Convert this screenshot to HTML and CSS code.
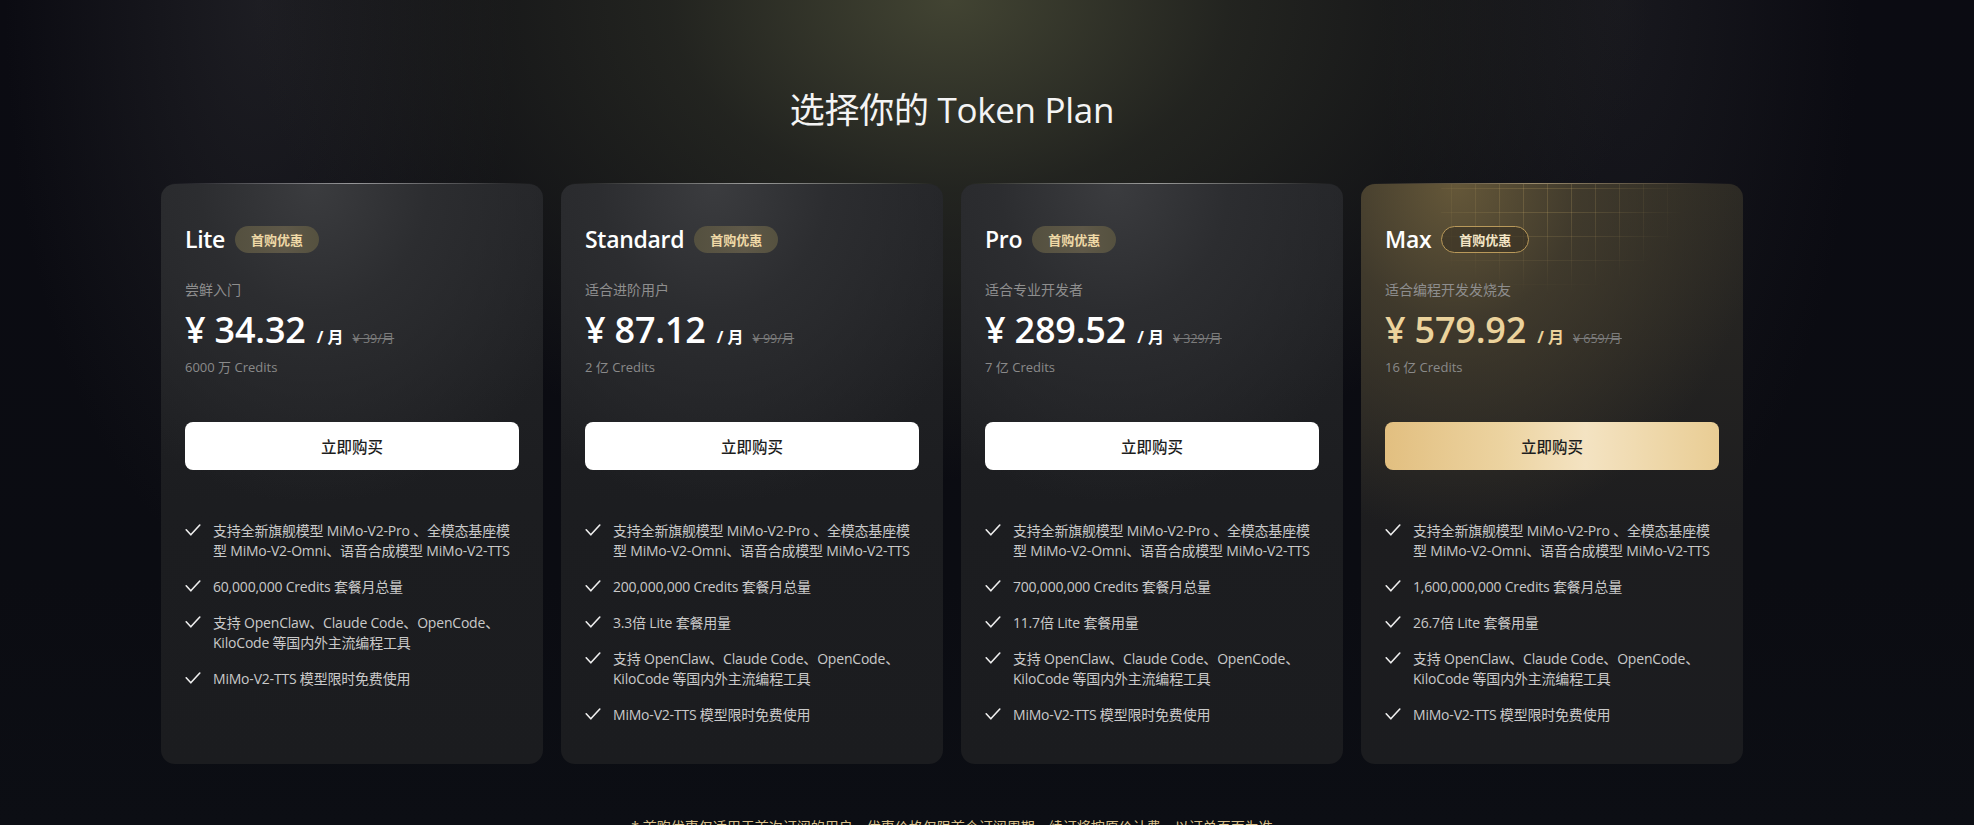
FILE: index.html
```html
<!DOCTYPE html>
<html lang="zh-CN">
<head>
<meta charset="utf-8">
<title>Token Plan</title>
<link rel="stylesheet" href="styles.css">
</head>
<body>
<main class="page">
  <h1 class="title">选择你的 Token Plan</h1>
  <section class="plans">
    <article class="card">
      <header class="card-head"><h2 class="plan-name">Lite</h2><span class="badge">首购优惠</span></header>
      <p class="plan-desc">尝鲜入门</p>
      <div class="price-row"><span class="price">¥ 34.32</span><span class="per">/ 月</span><span class="orig">¥ 39/月</span></div>
      <p class="credits">6000 万 Credits</p>
      <button class="buy">立即购买</button>
      <ul class="features">
        <li><svg class="check" viewBox="0 0 16 12"><polyline points="1.2,5.8 5.8,10.8 14.8,1"/></svg><span>支持全新旗舰模型 MiMo-V2-Pro 、全模态基座模型 MiMo-V2-Omni、语音合成模型 MiMo-V2-TTS</span></li>
        <li><svg class="check" viewBox="0 0 16 12"><polyline points="1.2,5.8 5.8,10.8 14.8,1"/></svg><span>60,000,000 Credits 套餐月总量</span></li>
        <li><svg class="check" viewBox="0 0 16 12"><polyline points="1.2,5.8 5.8,10.8 14.8,1"/></svg><span>支持 OpenClaw、Claude Code、OpenCode、KiloCode 等国内外主流编程工具</span></li>
        <li><svg class="check" viewBox="0 0 16 12"><polyline points="1.2,5.8 5.8,10.8 14.8,1"/></svg><span>MiMo-V2-TTS 模型限时免费使用</span></li>
      </ul>
    </article>
    <article class="card">
      <header class="card-head"><h2 class="plan-name">Standard</h2><span class="badge">首购优惠</span></header>
      <p class="plan-desc">适合进阶用户</p>
      <div class="price-row"><span class="price">¥ 87.12</span><span class="per">/ 月</span><span class="orig">¥ 99/月</span></div>
      <p class="credits">2 亿 Credits</p>
      <button class="buy">立即购买</button>
      <ul class="features">
        <li><svg class="check" viewBox="0 0 16 12"><polyline points="1.2,5.8 5.8,10.8 14.8,1"/></svg><span>支持全新旗舰模型 MiMo-V2-Pro 、全模态基座模型 MiMo-V2-Omni、语音合成模型 MiMo-V2-TTS</span></li>
        <li><svg class="check" viewBox="0 0 16 12"><polyline points="1.2,5.8 5.8,10.8 14.8,1"/></svg><span>200,000,000 Credits 套餐月总量</span></li>
        <li><svg class="check" viewBox="0 0 16 12"><polyline points="1.2,5.8 5.8,10.8 14.8,1"/></svg><span>3.3倍 Lite 套餐用量</span></li>
        <li><svg class="check" viewBox="0 0 16 12"><polyline points="1.2,5.8 5.8,10.8 14.8,1"/></svg><span>支持 OpenClaw、Claude Code、OpenCode、KiloCode 等国内外主流编程工具</span></li>
        <li><svg class="check" viewBox="0 0 16 12"><polyline points="1.2,5.8 5.8,10.8 14.8,1"/></svg><span>MiMo-V2-TTS 模型限时免费使用</span></li>
      </ul>
    </article>
    <article class="card">
      <header class="card-head"><h2 class="plan-name">Pro</h2><span class="badge">首购优惠</span></header>
      <p class="plan-desc">适合专业开发者</p>
      <div class="price-row"><span class="price">¥ 289.52</span><span class="per">/ 月</span><span class="orig">¥ 329/月</span></div>
      <p class="credits">7 亿 Credits</p>
      <button class="buy">立即购买</button>
      <ul class="features">
        <li><svg class="check" viewBox="0 0 16 12"><polyline points="1.2,5.8 5.8,10.8 14.8,1"/></svg><span>支持全新旗舰模型 MiMo-V2-Pro 、全模态基座模型 MiMo-V2-Omni、语音合成模型 MiMo-V2-TTS</span></li>
        <li><svg class="check" viewBox="0 0 16 12"><polyline points="1.2,5.8 5.8,10.8 14.8,1"/></svg><span>700,000,000 Credits 套餐月总量</span></li>
        <li><svg class="check" viewBox="0 0 16 12"><polyline points="1.2,5.8 5.8,10.8 14.8,1"/></svg><span>11.7倍 Lite 套餐用量</span></li>
        <li><svg class="check" viewBox="0 0 16 12"><polyline points="1.2,5.8 5.8,10.8 14.8,1"/></svg><span>支持 OpenClaw、Claude Code、OpenCode、KiloCode 等国内外主流编程工具</span></li>
        <li><svg class="check" viewBox="0 0 16 12"><polyline points="1.2,5.8 5.8,10.8 14.8,1"/></svg><span>MiMo-V2-TTS 模型限时免费使用</span></li>
      </ul>
    </article>
    <article class="card card-max">
      <header class="card-head"><h2 class="plan-name">Max</h2><span class="badge badge-max">首购优惠</span></header>
      <p class="plan-desc">适合编程开发发烧友</p>
      <div class="price-row"><span class="price">¥ 579.92</span><span class="per">/ 月</span><span class="orig">¥ 659/月</span></div>
      <p class="credits">16 亿 Credits</p>
      <button class="buy buy-max">立即购买</button>
      <ul class="features">
        <li><svg class="check" viewBox="0 0 16 12"><polyline points="1.2,5.8 5.8,10.8 14.8,1"/></svg><span>支持全新旗舰模型 MiMo-V2-Pro 、全模态基座模型 MiMo-V2-Omni、语音合成模型 MiMo-V2-TTS</span></li>
        <li><svg class="check" viewBox="0 0 16 12"><polyline points="1.2,5.8 5.8,10.8 14.8,1"/></svg><span>1,600,000,000 Credits 套餐月总量</span></li>
        <li><svg class="check" viewBox="0 0 16 12"><polyline points="1.2,5.8 5.8,10.8 14.8,1"/></svg><span>26.7倍 Lite 套餐用量</span></li>
        <li><svg class="check" viewBox="0 0 16 12"><polyline points="1.2,5.8 5.8,10.8 14.8,1"/></svg><span>支持 OpenClaw、Claude Code、OpenCode、KiloCode 等国内外主流编程工具</span></li>
        <li><svg class="check" viewBox="0 0 16 12"><polyline points="1.2,5.8 5.8,10.8 14.8,1"/></svg><span>MiMo-V2-TTS 模型限时免费使用</span></li>
      </ul>
    </article>
  </section>
  <p class="note">* 首购优惠仅适用于首次订阅的用户，优惠价格仅限首个订阅周期，续订将按原价计费，以订单页面为准</p>
</main>
</body>
</html>
```

FILE: styles.css
```css
* { box-sizing: border-box; }

html, body {
  margin: 0;
  height: 100%;
}

body {
  overflow: hidden;
  font-family: "Open Sans", "Noto Sans CJK SC", sans-serif;
  color: #f2f2f2;
  background:
    radial-gradient(ellipse 700px 480px at 950px 0, rgba(72, 74, 54, 0.9) 0%, rgba(50, 52, 41, 0.6) 40%, rgba(30, 30, 28, 0) 100%),
    radial-gradient(ellipse 340px 760px at 260px 0, rgba(44, 44, 48, 0.55), rgba(20, 20, 24, 0) 75%),
    radial-gradient(ellipse 320px 760px at 1620px 0, rgba(40, 40, 44, 0.45), rgba(20, 20, 24, 0) 75%),
    linear-gradient(180deg, #0b0b12 0%, #0b0c12 70%, #0c0e14 100%);
}

.page {
  display: flex;
  flex-direction: column;
  align-items: center;
  padding: 86px 70px 0 0;
}

.title {
  margin: 0;
  font-size: 35px;
  line-height: 48px;
  font-weight: 400;
  color: #f4f4f4;
  letter-spacing: -0.3px;
}

.plans {
  display: grid;
  grid-template-columns: repeat(4, 382px);
  gap: 18px;
  margin-top: 50px;
}

.card {
  position: relative;
  height: 580px;
  padding: 40px 24px 40px;
  border-radius: 14px;
  background:
    radial-gradient(ellipse 75% 55% at 40% 0%, #3b3c3f 0%, #2c2d30 40%, rgba(28, 29, 32, 0) 100%),
    linear-gradient(180deg, #232427 0%, #1c1d20 55%, #1b1c1f 100%);
}

.card::before {
  content: "";
  position: absolute;
  left: 10px;
  right: 10px;
  top: -1px;
  height: 1px;
  background: linear-gradient(90deg, rgba(255,255,255,0) 0%, rgba(255,255,255,0.25) 20%, rgba(255,255,255,0.55) 50%, rgba(255,255,255,0.25) 80%, rgba(255,255,255,0) 100%);
}

.card-max {
  background:
    radial-gradient(ellipse 80% 60% at 25% 0%, rgba(104, 90, 58, 0.95) 0%, rgba(74, 66, 48, 0.7) 40%, rgba(28, 29, 32, 0) 100%),
    linear-gradient(180deg, #2a2823 0%, #1d1d1f 60%, #1b1c1f 100%);
}

.card-max::before {
  background: linear-gradient(90deg, rgba(230,200,140,0) 0%, rgba(230,200,140,0.35) 20%, rgba(240,215,160,0.6) 45%, rgba(230,200,140,0.3) 80%, rgba(230,200,140,0) 100%);
}

.card-max::after {
  content: "";
  position: absolute;
  left: 80px;
  top: 0;
  width: 260px;
  height: 130px;
  pointer-events: none;
  background-image:
    linear-gradient(90deg, rgba(210, 180, 110, 0.2) 1px, transparent 1px),
    linear-gradient(180deg, rgba(210, 180, 110, 0.2) 1px, transparent 1px);
  background-size: 24px 24px;
  background-position: 10px 4px;
  -webkit-mask-image: radial-gradient(ellipse 55% 75% at 40% 10%, #000 20%, transparent 100%);
  mask-image: radial-gradient(ellipse 55% 75% at 40% 10%, #000 20%, transparent 100%);
}

.card > * { position: relative; z-index: 1; }

.card-head {
  display: flex;
  align-items: center;
  gap: 10px;
  height: 30px;
}

.plan-name {
  margin: 0;
  font-size: 23px;
  font-weight: 600;
  color: #ffffff;
  letter-spacing: -0.3px;
}

.badge {
  display: inline-flex;
  align-items: center;
  height: 27px;
  padding: 0 16px;
  border-radius: 14px;
  font-size: 13px;
  font-weight: 700;
  color: #efd9a6;
  background: linear-gradient(90deg, #54503f 0%, #5e5848 60%, #55513f 100%);
}

.badge-max {
  padding: 0 17px;
  color: #f4e6c6;
  background: rgba(52, 46, 32, 0.55);
  border: 1px solid #b9995a;
}

.plan-desc {
  margin: 26px 0 0;
  font-size: 14px;
  line-height: 20px;
  color: #8e8e8e;
}

.price-row {
  display: flex;
  align-items: baseline;
  margin-top: 8px;
  height: 44px;
}

.price {
  font-size: 36px;
  line-height: 44px;
  font-weight: 600;
  color: #ffffff;
  letter-spacing: -0.2px;
}

.per {
  margin-left: 11px;
  font-size: 16px;
  font-weight: 700;
  color: #ffffff;
}

.orig {
  margin-left: 9px;
  font-size: 12.5px;
  color: #7c7c7c;
  text-decoration: line-through;
}

.card-max .price,
.card-max .per {
  color: #ecd39c;
}

.credits {
  margin: 6px 0 0;
  font-size: 13px;
  line-height: 18px;
  color: #8a8a8a;
}

.buy {
  display: block;
  width: 100%;
  height: 48px;
  margin-top: 46px;
  border: 0;
  border-radius: 8px;
  background: #ffffff;
  font-family: inherit;
  font-size: 15.5px;
  font-weight: 500;
  color: #1e1e1e;
}

.buy-max {
  background: linear-gradient(90deg, #e2bf80 0%, #ecd3a0 35%, #f4e3c2 60%, #e9cd94 100%);
}

.features {
  list-style: none;
  margin: 51px 0 0;
  padding: 0;
  display: flex;
  flex-direction: column;
  gap: 16px;
}

.features li {
  display: flex;
  align-items: flex-start;
  gap: 12px;
  font-size: 14px;
  line-height: 20px;
  color: #c9c9c9;
  letter-spacing: -0.2px;
}

.check {
  flex: none;
  width: 16px;
  height: 12px;
  margin-top: 3px;
  fill: none;
  stroke: #eeeeee;
  stroke-width: 1.6;
  stroke-linecap: round;
  stroke-linejoin: round;
}

.note {
  margin: 53px 0 0;
  font-size: 14px;
  line-height: 20px;
  color: #d8c08c;
}
```
